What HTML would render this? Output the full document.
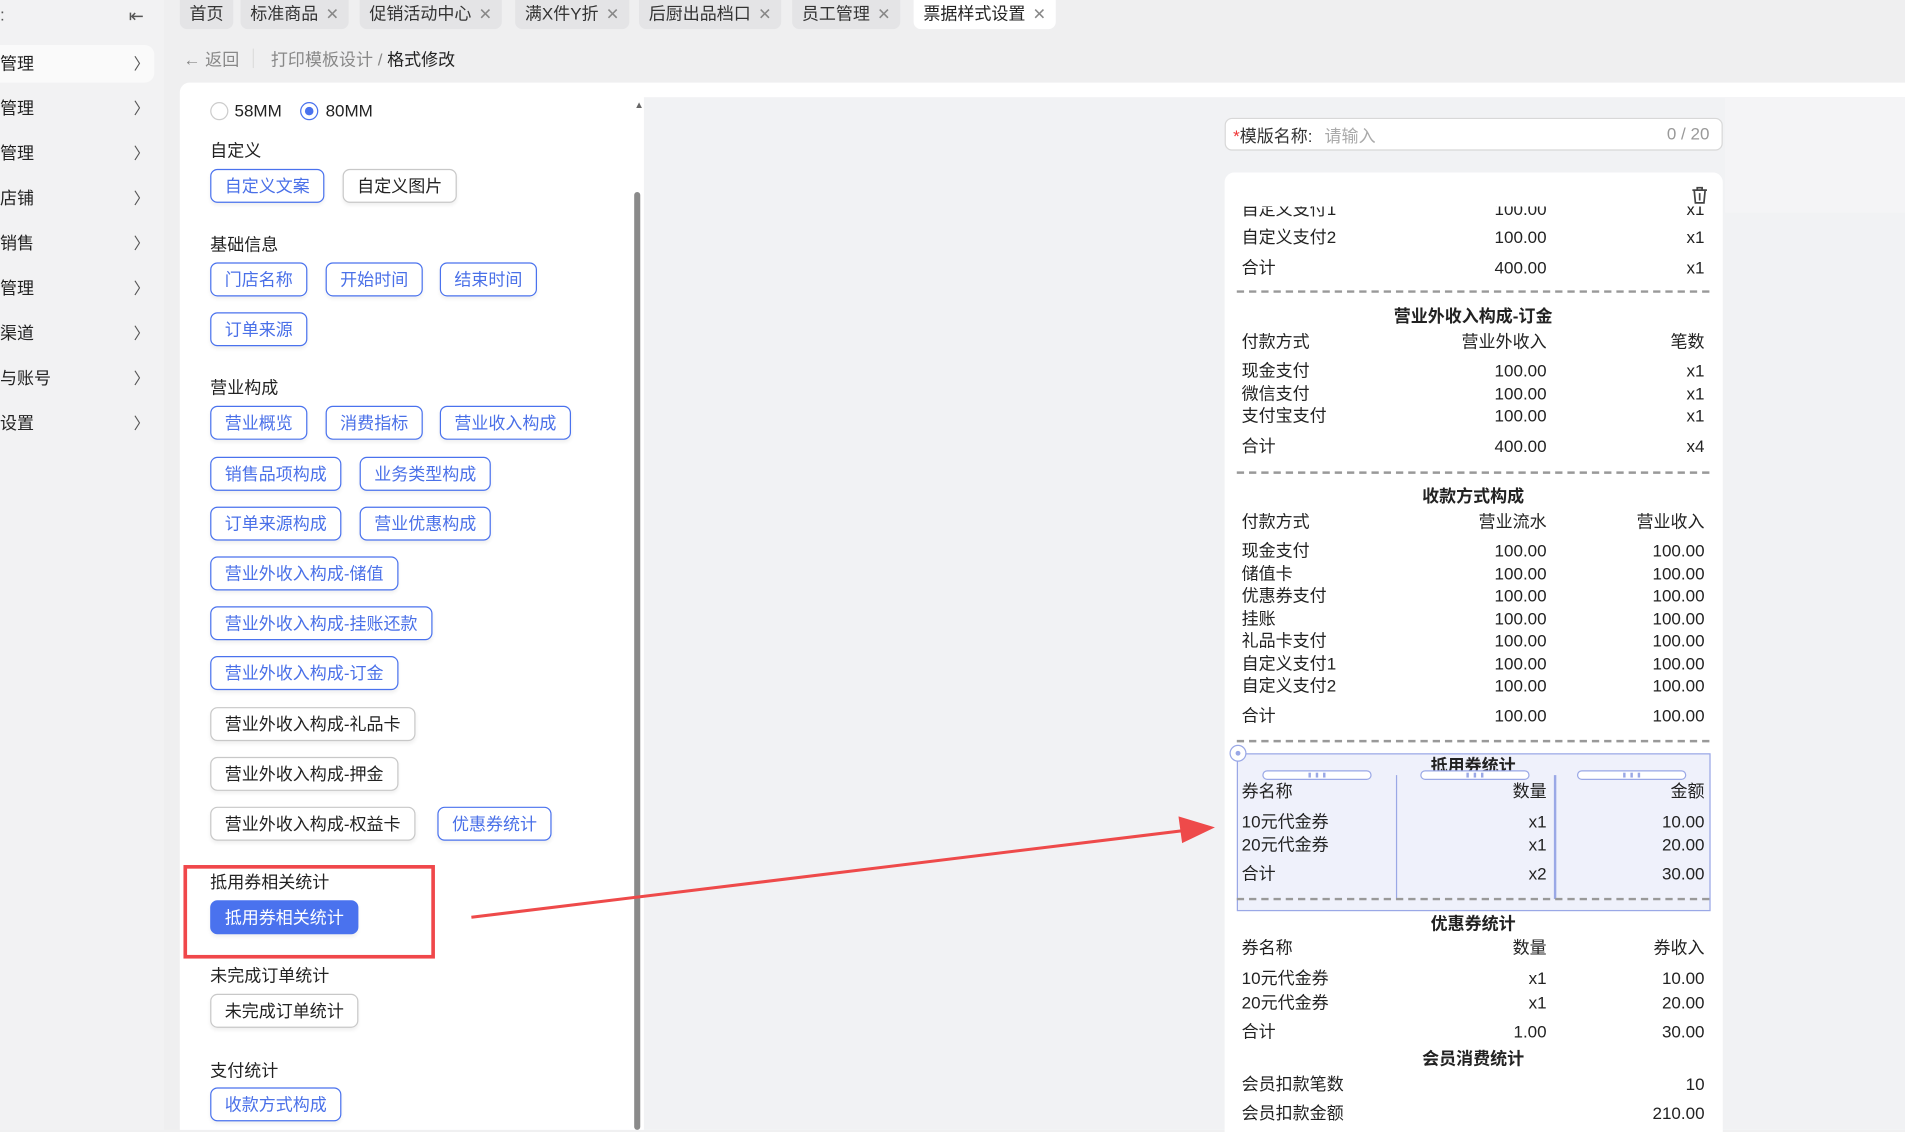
<!DOCTYPE html>
<html><head><meta charset="utf-8">
<style>
*{margin:0;padding:0;box-sizing:border-box}
html,body{width:1905px;height:1130px;overflow:hidden;background:#f0f0f1}
#w{position:absolute;left:0;top:0;width:1568px;height:930px;transform:scale(1.21492);transform-origin:0 0;font-family:"Liberation Sans","Noto Sans CJK SC",sans-serif;color:#222;font-size:14px;background:#efeff0}
.a{position:absolute;white-space:nowrap}
.side{left:0;top:0;width:135px;height:930px;background:#f2f2f3}
.si{left:0;width:127px;height:31px;line-height:31px;font-size:14px;color:#222}
.si span{position:absolute;right:4px;top:0;color:#555;font-size:13px}
.tab{top:0;height:24px;line-height:23px;background:#e4e4e6;border-radius:0 0 6px 6px;padding:0 8px;font-size:14px;color:#333}
.tab i{font-style:normal;color:#888;margin-left:6px;font-size:13px}
.btn{height:28px;line-height:26px;border:1px solid #4a72ee;border-radius:6px;padding:0 11px;color:#4a70e8;font-size:14px;background:#fff;box-shadow:0 2px 3px rgba(0,0,0,.06)}
.bk{border-color:#c8c8c8;color:#222}
.lbl{font-size:14px;color:#222}
.r{position:absolute;left:1022px;width:381px;height:18px;line-height:18px;font-size:14px;color:#222}
.r b{font-weight:normal;position:absolute;left:0}
.r .m{position:absolute;right:130px}
.r .e{position:absolute;right:0}
.t{position:absolute;left:1018px;width:389px;text-align:center;font-weight:bold;font-size:14px}
.d{position:absolute;left:1018px;width:389px;border-top:2px dashed #999}
.h{position:absolute;top:634px;width:90px;height:8px;border:1px solid #9aa8e6;border-radius:5px;background:#fff;text-align:center;font-size:0}
.h i{display:inline-block;width:2px;height:4px;background:#9aa8e6;margin:1px 2px 0}
</style></head><body><div id="w">
<div class="a side"></div>
<div class="a" style="left:0;top:4px;color:#555">:</div>
<div class="a" style="left:106px;top:4px;color:#555;font-size:15px">⇤</div>
<div class="a" style="left:0;top:37px;width:127px;height:31px;background:#fafafa;border-radius:0 8px 8px 0"></div>
<div class="a si" style="top:37px">管理<span>〉</span></div>
<div class="a si" style="top:74px">管理<span>〉</span></div>
<div class="a si" style="top:111px">管理<span>〉</span></div>
<div class="a si" style="top:148px">店铺<span>〉</span></div>
<div class="a si" style="top:185px">销售<span>〉</span></div>
<div class="a si" style="top:222px">管理<span>〉</span></div>
<div class="a si" style="top:259px">渠道<span>〉</span></div>
<div class="a si" style="top:296px">与账号<span>〉</span></div>
<div class="a si" style="top:333px">设置<span>〉</span></div>

<div class="a tab" style="left:148px">首页</div>
<div class="a tab" style="left:198px">标准商品<i>✕</i></div>
<div class="a tab" style="left:296px">促销活动中心<i>✕</i></div>
<div class="a tab" style="left:424px">满X件Y折<i>✕</i></div>
<div class="a tab" style="left:526px">后厨出品档口<i>✕</i></div>
<div class="a tab" style="left:652px">员工管理<i>✕</i></div>
<div class="a tab" style="left:752px;background:#fff;color:#222">票据样式设置<i>✕</i></div>

<div class="a" style="left:151px;top:39px;color:#888">← 返回</div>
<div class="a" style="left:208px;top:40px;width:1px;height:16px;background:#ddd"></div>
<div class="a" style="left:223px;top:39px;color:#888">打印模板设计 / <span style="color:#222">格式修改</span></div>

<div class="a" style="left:148px;top:68px;width:1420px;height:862px;background:#fff;border-radius:8px 0 0 0"></div>
<div class="a" style="left:530px;top:80px;width:1038px;height:850px;background:#f1f2f4"></div>
<div class="a" style="left:1420px;top:80px;width:148px;height:95px;background:#f4f4f6"></div>
<div class="a" style="left:522px;top:82px;font-size:8px;color:#666">▲</div>
<div class="a" style="left:522px;top:158px;width:5px;height:772px;background:#8a8a8a;border-radius:3px"></div>

<div class="a" style="left:173px;top:84px;width:15px;height:15px;border:1px solid #ccc;border-radius:50%"></div>
<div class="a" style="left:193px;top:83px">58MM</div>
<div class="a" style="left:247px;top:84px;width:15px;height:15px;border:1px solid #4a72ee;border-radius:50%"><div style="margin:3px;width:7px;height:7px;border-radius:50%;background:#4a72ee"></div></div>
<div class="a" style="left:268px;top:83px">80MM</div>

<div class="a lbl" style="left:173px;top:114px">自定义</div>
<div class="a btn" style="left:173px;top:139px">自定义文案</div>
<div class="a btn bk" style="left:282px;top:139px">自定义图片</div>
<div class="a lbl" style="left:173px;top:191px">基础信息</div>
<div class="a btn" style="left:173px;top:216px">门店名称</div>
<div class="a btn" style="left:268px;top:216px">开始时间</div>
<div class="a btn" style="left:362px;top:216px">结束时间</div>
<div class="a btn" style="left:173px;top:257px">订单来源</div>
<div class="a lbl" style="left:173px;top:309px">营业构成</div>
<div class="a btn" style="left:173px;top:334px">营业概览</div>
<div class="a btn" style="left:268px;top:334px">消费指标</div>
<div class="a btn" style="left:362px;top:334px">营业收入构成</div>
<div class="a btn" style="left:173px;top:376px">销售品项构成</div>
<div class="a btn" style="left:296px;top:376px">业务类型构成</div>
<div class="a btn" style="left:173px;top:417px">订单来源构成</div>
<div class="a btn" style="left:296px;top:417px">营业优惠构成</div>
<div class="a btn" style="left:173px;top:458px">营业外收入构成-储值</div>
<div class="a btn" style="left:173px;top:499px">营业外收入构成-挂账还款</div>
<div class="a btn" style="left:173px;top:540px">营业外收入构成-订金</div>
<div class="a btn bk" style="left:173px;top:582px">营业外收入构成-礼品卡</div>
<div class="a btn bk" style="left:173px;top:623px">营业外收入构成-押金</div>
<div class="a btn bk" style="left:173px;top:664px">营业外收入构成-权益卡</div>
<div class="a btn" style="left:360px;top:664px">优惠券统计</div>
<div class="a lbl" style="left:173px;top:716px">抵用券相关统计</div>
<div class="a btn" style="left:173px;top:741px;background:#4a72ee;color:#fff">抵用券相关统计</div>
<div class="a" style="left:151px;top:712px;width:207px;height:77px;border:3px solid #f0474a"></div>
<div class="a lbl" style="left:173px;top:793px">未完成订单统计</div>
<div class="a btn bk" style="left:173px;top:818px">未完成订单统计</div>
<div class="a lbl" style="left:173px;top:871px">支付统计</div>
<div class="a btn" style="left:173px;top:895px">收款方式构成</div>

<svg class="a" style="left:0;top:0" width="1568" height="930"><line x1="388" y1="755" x2="980" y2="683" stroke="#ee4a4a" stroke-width="2.5"/><polygon points="1000,681 970,672 973,694" fill="#ee4a4a"/></svg>

<div class="a" style="left:1008px;top:97px;width:410px;height:27px;border:1px solid #d8d8d8;border-radius:6px;background:#fff"></div>
<div class="a" style="left:1015px;top:102px;color:#333"><span style="color:#e33">*</span>模版名称: <span style="color:#aaa;margin-left:6px">请输入</span></div>
<div class="a" style="left:1372px;top:102px;color:#999">0 / 20</div>

<div class="a" style="left:1008px;top:142px;width:410px;height:790px;background:#fff;border-radius:8px 8px 0 0;overflow:hidden">
</div>
<svg class="a" style="left:1392px;top:153px" width="14" height="15" viewBox="0 0 14 15"><path d="M1 3.5h12M5 3.5V1.5h4v2M2.5 3.5l1 10.5h7l1-10.5M7 6v6" fill="none" stroke="#444" stroke-width="1.4"/></svg>
<div class="a" style="left:1018px;top:170px;width:390px;height:12px;overflow:hidden"><div class="r" style="left:4px;top:-7px"><b>自定义支付1</b><span class="m">100.00</span><span class="e">x1</span></div></div>
<div class="r" style="top:186px"><b>自定义支付2</b><span class="m">100.00</span><span class="e">x1</span></div>
<div class="r" style="top:211px"><b>合计</b><span class="m">400.00</span><span class="e">x1</span></div>
<div class="d" style="top:239px"></div>
<div class="t" style="top:250px">营业外收入构成-订金</div>
<div class="r" style="top:272px"><b>付款方式</b><span class="m">营业外收入</span><span class="e">笔数</span></div>
<div class="r" style="top:296px"><b>现金支付</b><span class="m">100.00</span><span class="e">x1</span></div>
<div class="r" style="top:315px"><b>微信支付</b><span class="m">100.00</span><span class="e">x1</span></div>
<div class="r" style="top:333px"><b>支付宝支付</b><span class="m">100.00</span><span class="e">x1</span></div>
<div class="r" style="top:358px"><b>合计</b><span class="m">400.00</span><span class="e">x4</span></div>
<div class="d" style="top:388px"></div>
<div class="t" style="top:398px">收款方式构成</div>
<div class="r" style="top:420px"><b>付款方式</b><span class="m">营业流水</span><span class="e">营业收入</span></div>
<div class="r" style="top:444px"><b>现金支付</b><span class="m">100.00</span><span class="e">100.00</span></div>
<div class="r" style="top:463px"><b>储值卡</b><span class="m">100.00</span><span class="e">100.00</span></div>
<div class="r" style="top:481px"><b>优惠券支付</b><span class="m">100.00</span><span class="e">100.00</span></div>
<div class="r" style="top:500px"><b>挂账</b><span class="m">100.00</span><span class="e">100.00</span></div>
<div class="r" style="top:518px"><b>礼品卡支付</b><span class="m">100.00</span><span class="e">100.00</span></div>
<div class="r" style="top:537px"><b>自定义支付1</b><span class="m">100.00</span><span class="e">100.00</span></div>
<div class="r" style="top:555px"><b>自定义支付2</b><span class="m">100.00</span><span class="e">100.00</span></div>
<div class="r" style="top:580px"><b>合计</b><span class="m">100.00</span><span class="e">100.00</span></div>
<div class="d" style="top:609px"></div>
<div class="a" style="left:1018px;top:620px;width:390px;height:130px;background:#eff1fb;border:1px solid #9aa8e6"></div>
<div class="a" style="left:1012px;top:613px;width:14px;height:14px;border:1px solid #9aa8e6;border-radius:50%;background:#fff"><div style="margin:4px;width:4px;height:4px;border-radius:50%;background:#9aa8e6"></div></div>
<div class="a" style="left:1149px;top:638px;width:1px;height:102px;background:#9aa8e6"></div>
<div class="a" style="left:1279px;top:638px;width:2px;height:102px;background:#9aa8e6"></div>
<div class="t" style="top:620px">抵用券统计</div>
<div class="h" style="left:1039px"><i></i><i></i><i></i></div><div class="h" style="left:1169px"><i></i><i></i><i></i></div><div class="h" style="left:1298px"><i></i><i></i><i></i></div>
<div class="r" style="top:642px"><b>券名称</b><span class="m">数量</span><span class="e">金额</span></div>
<div class="r" style="top:667px"><b>10元代金券</b><span class="m">x1</span><span class="e">10.00</span></div>
<div class="r" style="top:686px"><b>20元代金券</b><span class="m">x1</span><span class="e">20.00</span></div>
<div class="r" style="top:710px"><b>合计</b><span class="m">x2</span><span class="e">30.00</span></div>
<div class="d" style="top:739px"></div>
<div class="t" style="top:750px">优惠券统计</div>
<div class="r" style="top:771px"><b>券名称</b><span class="m">数量</span><span class="e">券收入</span></div>
<div class="r" style="top:796px"><b>10元代金券</b><span class="m">x1</span><span class="e">10.00</span></div>
<div class="r" style="top:816px"><b>20元代金券</b><span class="m">x1</span><span class="e">20.00</span></div>
<div class="r" style="top:840px"><b>合计</b><span class="m">1.00</span><span class="e">30.00</span></div>
<div class="t" style="top:861px">会员消费统计</div>
<div class="r" style="top:883px"><b>会员扣款笔数</b><span class="e">10</span></div>
<div class="r" style="top:907px"><b>会员扣款金额</b><span class="e">210.00</span></div>
</div></body></html>
